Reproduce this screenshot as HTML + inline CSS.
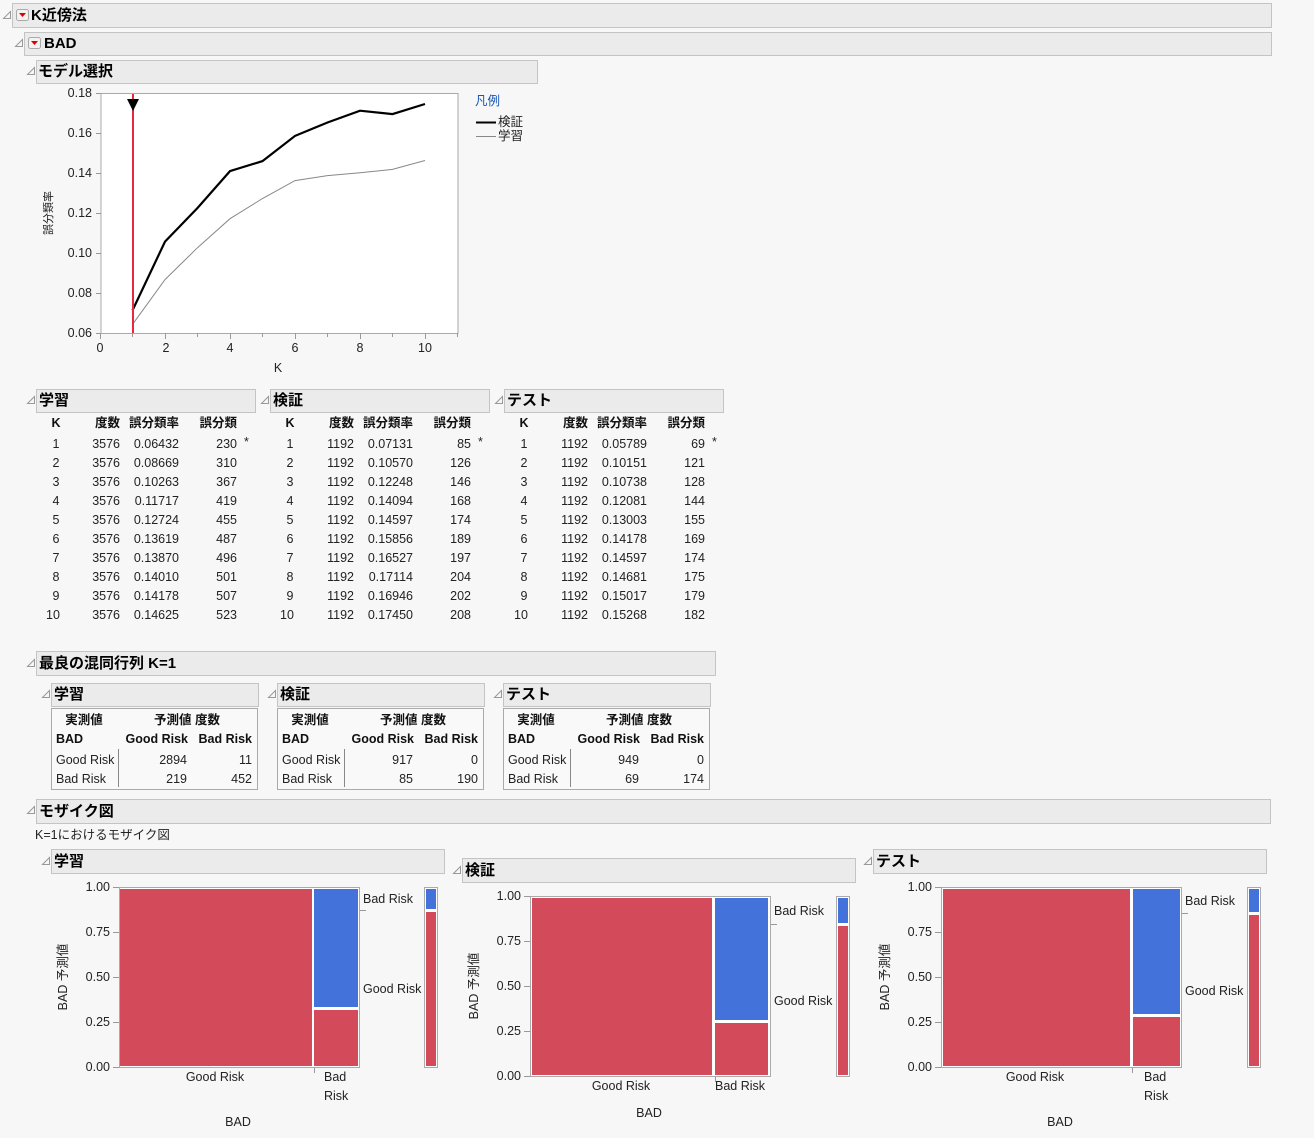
<!DOCTYPE html>
<html><head><meta charset="utf-8"><style>
html,body{margin:0;padding:0;background:#f7f7f7;}
svg{display:block;font-family:"Liberation Sans","Noto Sans CJK JP",sans-serif;}
.h{fill:#ebebeb;stroke:#c4c4c4;stroke-width:1}
.ht{font-size:15px;font-weight:bold;fill:#000}
.t{font-size:12.5px;fill:#222}
.b{font-size:12.5px;font-weight:bold;fill:#111}
.tri{fill:none;stroke:#999;stroke-width:1}
.ax{font-size:12.5px;fill:#222}
</style></head><body>
<svg width="1314" height="1138" viewBox="0 0 1314 1138" xmlns="http://www.w3.org/2000/svg">
<defs>
<g id="tr"><path class="tri" d="M0.5 7.5 L7.5 0.5 L7.5 7.5 Z"/></g>
<g id="dd"><rect x="0.5" y="0.5" width="12" height="11" rx="2" fill="#f2f2f2" stroke="#aaa"/><path d="M3 4 L10 4 L6.5 8 Z" fill="#d00"/></g>
</defs>

<use href="#tr" x="3" y="11"/>
<rect class="h" x="12.5" y="3.5" width="1259" height="24"/>
<use href="#dd" x="16" y="9"/>
<text class="ht" x="31" y="20">K近傍法</text>

<use href="#tr" x="15" y="39"/>
<rect class="h" x="24.5" y="32.5" width="1247" height="23"/>
<use href="#dd" x="28" y="37"/>
<text class="ht" x="44" y="48">BAD</text>

<use href="#tr" x="27" y="67"/>
<rect class="h" x="36.5" y="60.5" width="501" height="23"/>
<text class="ht" x="38" y="76">モデル選択</text>

<rect x="101" y="93.5" width="357" height="240" fill="#fff" stroke="#aaa"/>
<g stroke="#999" stroke-width="1">
<line x1="96" y1="93.5" x2="101" y2="93.5"/><line x1="96" y1="133.5" x2="101" y2="133.5"/>
<line x1="96" y1="173.5" x2="101" y2="173.5"/><line x1="96" y1="213.5" x2="101" y2="213.5"/>
<line x1="96" y1="253.5" x2="101" y2="253.5"/><line x1="96" y1="293.5" x2="101" y2="293.5"/>
<line x1="96" y1="333.5" x2="101" y2="333.5"/>
<line x1="100.5" y1="333" x2="100.5" y2="339"/><line x1="132.5" y1="333" x2="132.5" y2="337"/>
<line x1="165.5" y1="333" x2="165.5" y2="339"/><line x1="197.5" y1="333" x2="197.5" y2="337"/>
<line x1="230.5" y1="333" x2="230.5" y2="339"/><line x1="262.5" y1="333" x2="262.5" y2="337"/>
<line x1="295.5" y1="333" x2="295.5" y2="339"/><line x1="327.5" y1="333" x2="327.5" y2="337"/>
<line x1="360.5" y1="333" x2="360.5" y2="339"/><line x1="392.5" y1="333" x2="392.5" y2="337"/>
<line x1="425.5" y1="333" x2="425.5" y2="339"/><line x1="457.5" y1="333" x2="457.5" y2="337"/>
</g>
<g class="ax" text-anchor="end">
<text x="92" y="97">0.18</text><text x="92" y="137">0.16</text><text x="92" y="177">0.14</text>
<text x="92" y="217">0.12</text><text x="92" y="257">0.10</text><text x="92" y="297">0.08</text>
<text x="92" y="337">0.06</text>
</g>
<g class="ax" text-anchor="middle">
<text x="100" y="352">0</text><text x="166" y="352">2</text><text x="230" y="352">4</text>
<text x="295" y="352">6</text><text x="360" y="352">8</text><text x="425" y="352">10</text>
<text x="278" y="372">K</text>
</g>
<text class="t" font-size="11" style="font-size:11px" transform="translate(52,213) rotate(-90)" text-anchor="middle">誤分類率</text>
<polyline fill="none" stroke="#888" stroke-width="1" points="132.5,324.4 165,279.6 197.5,247.7 230,218.7 262.5,198.5 295,180.6 327.5,175.6 360,172.8 392.5,169.4 425,160.5"/>
<polyline fill="none" stroke="#000" stroke-width="2.2" points="132.5,310.4 165,241.6 197.5,208 230,171.1 262.5,161.1 295,135.9 327.5,122.5 360,110.7 392.5,114.1 425,104"/>
<line x1="133" y1="94" x2="133" y2="333" stroke="#e8283c" stroke-width="2"/>
<path d="M127 99 L139 99 L133 111 Z" fill="#000"/>
<text class="t" x="475" y="105" style="fill:#1a55b8">凡例</text>
<line x1="476" y1="122.5" x2="496" y2="122.5" stroke="#000" stroke-width="2"/>
<text class="t" x="498" y="126">検証</text>
<line x1="476" y1="136.5" x2="496" y2="136.5" stroke="#888" stroke-width="1"/>
<text class="t" x="498" y="140">学習</text>

<use href="#tr" x="27" y="396"/>
<rect class="h" x="36.5" y="389.5" width="219" height="23"/>
<text class="ht" x="39" y="405">学習</text>
<use href="#tr" x="261" y="396"/>
<rect class="h" x="270.5" y="389.5" width="219" height="23"/>
<text class="ht" x="273" y="405">検証</text>
<use href="#tr" x="495" y="396"/>
<rect class="h" x="504.5" y="389.5" width="219" height="23"/>
<text class="ht" x="507" y="405">テスト</text>

<g id="tab1">
<g class="b">
<text x="56" y="427" text-anchor="middle">K</text>
<text x="120" y="427" text-anchor="end">度数</text>
<text x="179" y="427" text-anchor="end">誤分類率</text>
<text x="237" y="427" text-anchor="end">誤分類</text>
</g>
</g>
<use href="#tab1" x="234"/>
<use href="#tab1" x="468"/>

<g class="t">
<g text-anchor="middle">
<text x="56" y="448">1</text><text x="56" y="467">2</text><text x="56" y="486">3</text><text x="56" y="505">4</text><text x="56" y="524">5</text><text x="56" y="543">6</text><text x="56" y="562">7</text><text x="56" y="581">8</text><text x="56" y="600">9</text><text x="53" y="619">10</text>
<text x="290" y="448">1</text><text x="290" y="467">2</text><text x="290" y="486">3</text><text x="290" y="505">4</text><text x="290" y="524">5</text><text x="290" y="543">6</text><text x="290" y="562">7</text><text x="290" y="581">8</text><text x="290" y="600">9</text><text x="287" y="619">10</text>
<text x="524" y="448">1</text><text x="524" y="467">2</text><text x="524" y="486">3</text><text x="524" y="505">4</text><text x="524" y="524">5</text><text x="524" y="543">6</text><text x="524" y="562">7</text><text x="524" y="581">8</text><text x="524" y="600">9</text><text x="521" y="619">10</text>
</g>
<g text-anchor="end">
<text x="120" y="448">3576</text><text x="120" y="467">3576</text><text x="120" y="486">3576</text><text x="120" y="505">3576</text><text x="120" y="524">3576</text><text x="120" y="543">3576</text><text x="120" y="562">3576</text><text x="120" y="581">3576</text><text x="120" y="600">3576</text><text x="120" y="619">3576</text>
<text x="179" y="448">0.06432</text><text x="179" y="467">0.08669</text><text x="179" y="486">0.10263</text><text x="179" y="505">0.11717</text><text x="179" y="524">0.12724</text><text x="179" y="543">0.13619</text><text x="179" y="562">0.13870</text><text x="179" y="581">0.14010</text><text x="179" y="600">0.14178</text><text x="179" y="619">0.14625</text>
<text x="237" y="448">230</text><text x="237" y="467">310</text><text x="237" y="486">367</text><text x="237" y="505">419</text><text x="237" y="524">455</text><text x="237" y="543">487</text><text x="237" y="562">496</text><text x="237" y="581">501</text><text x="237" y="600">507</text><text x="237" y="619">523</text>

<text x="354" y="448">1192</text><text x="354" y="467">1192</text><text x="354" y="486">1192</text><text x="354" y="505">1192</text><text x="354" y="524">1192</text><text x="354" y="543">1192</text><text x="354" y="562">1192</text><text x="354" y="581">1192</text><text x="354" y="600">1192</text><text x="354" y="619">1192</text>
<text x="413" y="448">0.07131</text><text x="413" y="467">0.10570</text><text x="413" y="486">0.12248</text><text x="413" y="505">0.14094</text><text x="413" y="524">0.14597</text><text x="413" y="543">0.15856</text><text x="413" y="562">0.16527</text><text x="413" y="581">0.17114</text><text x="413" y="600">0.16946</text><text x="413" y="619">0.17450</text>
<text x="471" y="448">85</text><text x="471" y="467">126</text><text x="471" y="486">146</text><text x="471" y="505">168</text><text x="471" y="524">174</text><text x="471" y="543">189</text><text x="471" y="562">197</text><text x="471" y="581">204</text><text x="471" y="600">202</text><text x="471" y="619">208</text>

<text x="588" y="448">1192</text><text x="588" y="467">1192</text><text x="588" y="486">1192</text><text x="588" y="505">1192</text><text x="588" y="524">1192</text><text x="588" y="543">1192</text><text x="588" y="562">1192</text><text x="588" y="581">1192</text><text x="588" y="600">1192</text><text x="588" y="619">1192</text>
<text x="647" y="448">0.05789</text><text x="647" y="467">0.10151</text><text x="647" y="486">0.10738</text><text x="647" y="505">0.12081</text><text x="647" y="524">0.13003</text><text x="647" y="543">0.14178</text><text x="647" y="562">0.14597</text><text x="647" y="581">0.14681</text><text x="647" y="600">0.15017</text><text x="647" y="619">0.15268</text>
<text x="705" y="448">69</text><text x="705" y="467">121</text><text x="705" y="486">128</text><text x="705" y="505">144</text><text x="705" y="524">155</text><text x="705" y="543">169</text><text x="705" y="562">174</text><text x="705" y="581">175</text><text x="705" y="600">179</text><text x="705" y="619">182</text>
</g>
<text x="244" y="446">*</text><text x="478" y="446">*</text><text x="712" y="446">*</text>
</g>

<use href="#tr" x="27" y="659"/>
<rect class="h" x="36.5" y="651.5" width="679" height="24"/>
<text class="ht" x="39" y="668">最良の混同行列 K=1</text>

<use href="#tr" x="42" y="690"/>
<rect class="h" x="51.5" y="683.5" width="207" height="23"/>
<text class="ht" x="54" y="699">学習</text>
<use href="#tr" x="268" y="690"/>
<rect class="h" x="277.5" y="683.5" width="207" height="23"/>
<text class="ht" x="280" y="699">検証</text>
<use href="#tr" x="494" y="690"/>
<rect class="h" x="503.5" y="683.5" width="207" height="23"/>
<text class="ht" x="506" y="699">テスト</text>

<g id="cm1">
<rect x="51.5" y="708.5" width="206" height="81" fill="#f9f9f9" stroke="#aaa"/>
<line x1="118.5" y1="749" x2="118.5" y2="787" stroke="#888"/>
<g class="b">
<text x="84" y="724" text-anchor="middle">実測値</text>
<text x="187" y="724" text-anchor="middle">予測値 度数</text>
<text x="56" y="743">BAD</text>
<text x="188" y="743" text-anchor="end">Good Risk</text>
<text x="252" y="743" text-anchor="end">Bad Risk</text>
</g>
<g class="t">
<text x="56" y="764">Good Risk</text>
<text x="56" y="783">Bad Risk</text>
</g>
</g>
<use href="#cm1" x="226"/>
<use href="#cm1" x="452"/>
<g class="t" text-anchor="end">
<text x="187" y="764">2894</text><text x="252" y="764">11</text>
<text x="187" y="783">219</text><text x="252" y="783">452</text>
<text x="413" y="764">917</text><text x="478" y="764">0</text>
<text x="413" y="783">85</text><text x="478" y="783">190</text>
<text x="639" y="764">949</text><text x="704" y="764">0</text>
<text x="639" y="783">69</text><text x="704" y="783">174</text>
</g>

<use href="#tr" x="27" y="806"/>
<rect class="h" x="36.5" y="799.5" width="1234" height="24"/>
<text class="ht" x="39" y="816">モザイク図</text>
<text class="t" x="35" y="839">K=1におけるモザイク図</text>

<use href="#tr" x="42" y="857"/>
<rect class="h" x="51.5" y="849.5" width="393" height="24"/>
<text class="ht" x="54" y="866">学習</text>
<g class="ax" text-anchor="end">
<text x="110" y="891">1.00</text><text x="110" y="936">0.75</text><text x="110" y="981">0.50</text><text x="110" y="1026">0.25</text><text x="110" y="1071">0.00</text>
</g>
<g stroke="#999"><line x1="113" y1="887.5" x2="119" y2="887.5"/><line x1="113" y1="932.5" x2="119" y2="932.5"/><line x1="113" y1="977.5" x2="119" y2="977.5"/><line x1="113" y1="1022.5" x2="119" y2="1022.5"/><line x1="113" y1="1067.5" x2="119" y2="1067.5"/><line x1="314.5" y1="1068" x2="314.5" y2="1073"/><line x1="359" y1="910.5" x2="366" y2="910.5"/></g>
<rect x="119.5" y="887.5" width="240" height="180" fill="#fff" stroke="#aaa"/>
<rect x="120" y="889" width="192" height="177" fill="#d34a5a"/>
<rect x="314" y="889" width="44" height="118" fill="#4472db"/>
<rect x="314" y="1010" width="44" height="56" fill="#d34a5a"/>
<rect x="424.5" y="887.5" width="13" height="180" fill="#fff" stroke="#aaa"/>
<rect x="426" y="889" width="10" height="20" fill="#4472db"/>
<rect x="426" y="912" width="10" height="154" fill="#d34a5a"/>
<g class="t">
<text x="363" y="903">Bad Risk</text><text x="363" y="993">Good Risk</text>
<text x="215" y="1081" text-anchor="middle">Good Risk</text>
<text x="324" y="1081">Bad</text><text x="324" y="1100">Risk</text>
<text x="238" y="1126" text-anchor="middle">BAD</text>
<text transform="translate(67,977) rotate(-90)" text-anchor="middle">BAD 予測値</text>
</g>

<use href="#tr" x="453" y="866"/>
<rect class="h" x="462.5" y="858.5" width="393" height="24"/>
<text class="ht" x="465" y="875">検証</text>
<g class="ax" text-anchor="end">
<text x="521" y="900">1.00</text><text x="521" y="945">0.75</text><text x="521" y="990">0.50</text><text x="521" y="1035">0.25</text><text x="521" y="1080">0.00</text>
</g>
<g stroke="#999"><line x1="524" y1="896.5" x2="530" y2="896.5"/><line x1="524" y1="941.5" x2="530" y2="941.5"/><line x1="524" y1="986.5" x2="530" y2="986.5"/><line x1="524" y1="1031.5" x2="530" y2="1031.5"/><line x1="524" y1="1076.5" x2="530" y2="1076.5"/><line x1="715.5" y1="1077" x2="715.5" y2="1082"/><line x1="770" y1="924.5" x2="777" y2="924.5"/></g>
<rect x="530.5" y="896.5" width="240" height="180" fill="#fff" stroke="#aaa"/>
<rect x="532" y="898" width="180" height="177" fill="#d34a5a"/>
<rect x="715" y="898" width="53" height="122" fill="#4472db"/>
<rect x="715" y="1023" width="53" height="52" fill="#d34a5a"/>
<rect x="836.5" y="896.5" width="13" height="180" fill="#fff" stroke="#aaa"/>
<rect x="838" y="898" width="10" height="25" fill="#4472db"/>
<rect x="838" y="926" width="10" height="149" fill="#d34a5a"/>
<g class="t">
<text x="774" y="915">Bad Risk</text><text x="774" y="1005">Good Risk</text>
<text x="621" y="1090" text-anchor="middle">Good Risk</text>
<text x="715" y="1090">Bad Risk</text>
<text x="649" y="1117" text-anchor="middle">BAD</text>
<text transform="translate(478,986) rotate(-90)" text-anchor="middle">BAD 予測値</text>
</g>

<use href="#tr" x="864" y="857"/>
<rect class="h" x="873.5" y="849.5" width="393" height="24"/>
<text class="ht" x="876" y="866">テスト</text>
<g class="ax" text-anchor="end">
<text x="932" y="891">1.00</text><text x="932" y="936">0.75</text><text x="932" y="981">0.50</text><text x="932" y="1026">0.25</text><text x="932" y="1071">0.00</text>
</g>
<g stroke="#999"><line x1="935" y1="887.5" x2="941" y2="887.5"/><line x1="935" y1="932.5" x2="941" y2="932.5"/><line x1="935" y1="977.5" x2="941" y2="977.5"/><line x1="935" y1="1022.5" x2="941" y2="1022.5"/><line x1="935" y1="1067.5" x2="941" y2="1067.5"/><line x1="1132.5" y1="1068" x2="1132.5" y2="1073"/><line x1="1181" y1="913.5" x2="1188" y2="913.5"/></g>
<rect x="941.5" y="887.5" width="240" height="180" fill="#fff" stroke="#aaa"/>
<rect x="943" y="889" width="187" height="177" fill="#d34a5a"/>
<rect x="1133" y="889" width="47" height="125" fill="#4472db"/>
<rect x="1133" y="1017" width="47" height="49" fill="#d34a5a"/>
<rect x="1247.5" y="887.5" width="13" height="180" fill="#fff" stroke="#aaa"/>
<rect x="1249" y="889" width="10" height="23" fill="#4472db"/>
<rect x="1249" y="915" width="10" height="151" fill="#d34a5a"/>
<g class="t">
<text x="1185" y="905">Bad Risk</text><text x="1185" y="995">Good Risk</text>
<text x="1035" y="1081" text-anchor="middle">Good Risk</text>
<text x="1144" y="1081">Bad</text><text x="1144" y="1100">Risk</text>
<text x="1060" y="1126" text-anchor="middle">BAD</text>
<text transform="translate(889,977) rotate(-90)" text-anchor="middle">BAD 予測値</text>
</g>
</svg>
</body></html>
